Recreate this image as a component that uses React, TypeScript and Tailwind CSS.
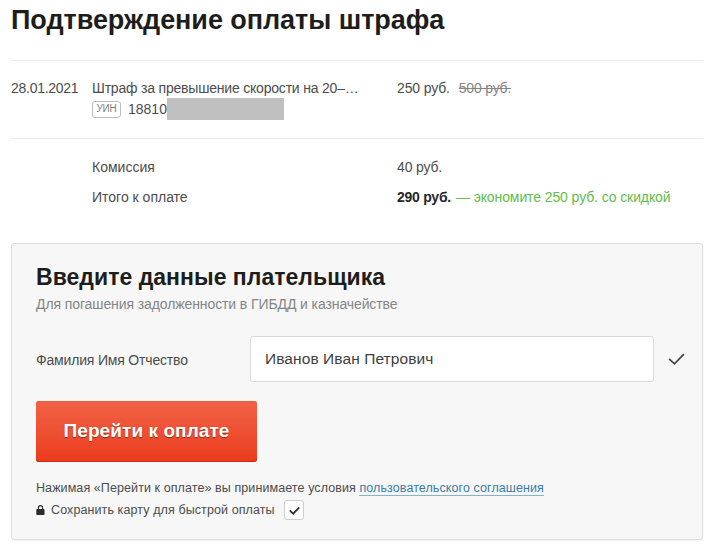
import type { ReactNode } from "react";

const FINE = {
  date: "28.01.2021",
  title: "Штраф за превышение скорости на 20–…",
  uin: "18810",
  price: "250 руб.",
  oldPrice: "500 руб.",
};

function CheckIcon({ className, strokeWidth }: { className: string; strokeWidth: number }) {
  return (
    <svg viewBox="0 0 18 14" fill="none" stroke="currentColor" strokeWidth={strokeWidth} className={className}>
      <path d="M1.2 6.8 6.9 12.2 16.8 1.8" />
    </svg>
  );
}

function LockIcon() {
  return (
    <svg viewBox="0 0 9 10" className="h-[10px] w-[9px] shrink-0 text-[#2b2b2b]">
      <path d="M2.4 5V2.7a2.1 2.1 0 0 1 4.2 0V5" fill="none" stroke="currentColor" strokeWidth="1.1" />
      <rect x="0.3" y="4" width="8.2" height="6" rx="0.8" fill="currentColor" />
    </svg>
  );
}

function SummaryRow({ label, children }: { label: string; children: ReactNode }) {
  return (
    <div className="flex h-[30px] items-center pl-[81px]">
      <span className="w-[305px]">{label}</span>
      <span className="whitespace-nowrap">{children}</span>
    </div>
  );
}

function FineSummary() {
  return (
    <section className="text-sm leading-5 text-[#4c4c4c]">
      <div className="flex h-[79px] border-y border-[#ededed] pt-[17px]">
        <span className="w-[81px] tracking-[-0.27px]">{FINE.date}</span>
        <div className="w-[305px]">
          <p className="tracking-[-0.2px] whitespace-nowrap">{FINE.title}</p>
          <div className="flex h-[22px] items-center">
            <span className="mr-[7px] flex h-[17px] w-[29px] items-center justify-center rounded-[3px] border border-[#bdbdbd] text-[10px] tracking-[-0.2px] text-[#808080]">
              УИН
            </span>
            <span className="w-[39px]">{FINE.uin}</span>
            <span className="h-[22px] w-[117px] bg-[#c0c0c0]" />
          </div>
        </div>
        <span className="tracking-[-0.15px]">{FINE.price}</span>
        <s className="ml-[9px] tracking-[-0.2px] text-[#858585]">{FINE.oldPrice}</s>
      </div>
      <div className="pt-[13px]">
        <SummaryRow label="Комиссия">
          <span className="tracking-[-0.15px]">40 руб.</span>
        </SummaryRow>
        <SummaryRow label="Итого к оплате">
          <b className="tracking-[-0.25px] text-[#262626]">290 руб.</b>
          <span className="ml-[5px] tracking-[-0.1px] text-[#62bd4b]">— экономите 250 руб. со скидкой</span>
        </SummaryRow>
      </div>
    </section>
  );
}

function PayerForm() {
  return (
    <form className="mt-[31px] h-[297px] w-[692px] rounded-[3px] border border-[#dedede] bg-[#f7f7f7] px-6 pt-[18px] shadow-[0_1px_2px_rgba(0,0,0,0.05)]">
      <h2 className="text-[23px] leading-[30px] font-bold tracking-[0.03px] whitespace-nowrap text-[#1d1d1b]">
        Введите данные плательщика
      </h2>
      <p className="mt-px text-sm leading-[22px] tracking-[-0.1px] text-[#858585]">
        Для погашения задолженности в ГИБДД и казначействе
      </p>

      <div className="mt-[21px] flex h-[46px] items-center">
        <label htmlFor="payer" className="w-[214px] shrink-0 pt-px text-sm tracking-[-0.18px] text-[#4c4c4c]">
          Фамилия Имя Отчество
        </label>
        <input
          id="payer"
          defaultValue="Иванов Иван Петрович"
          className="h-[46px] w-[404px] shrink-0 rounded-[3px] border border-[#d9d9d9] bg-white px-[14px] text-[15.5px] tracking-[0.08px] text-[#404040]"
        />
        <CheckIcon className="ml-[14px] h-[14px] w-[17px] shrink-0 text-[#444]" strokeWidth={1.8} />
      </div>

      <button
        type="button"
        className="mt-[19px] block h-[61px] w-[221px] rounded-[3px] bg-linear-to-b from-[#f16245] to-[#eb3a1b] text-[19px] font-bold tracking-[0.07px] whitespace-nowrap text-white shadow-[inset_0_-1px_0_#cc2b12,inset_0_1px_0_#e85b3e] text-shadow-[0_1px_1px_rgba(0,0,0,0.4)]"
      >
        Перейти к оплате
      </button>

      <p className="mt-[17px] text-[12.5px] leading-[18px] tracking-[0.09px] whitespace-nowrap text-[#4c4c4c]">
        Нажимая «Перейти к оплате» вы принимаете условия{" "}
        <a href="#terms" className="border-b border-[#84b5d0] text-[#3a7ca5]">
          пользовательского соглашения
        </a>
      </p>
      <div className="mt-[3px] flex h-5 items-center text-[12.5px] text-[#4c4c4c]">
        <LockIcon />
        <span className="ml-[6px] w-[224px] tracking-[0.1px] whitespace-nowrap">
          Сохранить карту для быстрой оплаты
        </span>
        <span className="ml-[9px] flex size-5 items-center justify-center rounded-[3px] border border-[#cfcfcf] bg-white">
          <CheckIcon className="h-[9px] w-[11px] text-[#333]" strokeWidth={3} />
        </span>
      </div>
    </form>
  );
}

export default function App() {
  return (
    <main className="h-[548px] w-[709px] overflow-hidden bg-white pl-[11px] font-['Liberation_Sans',Arial,sans-serif]">
      <div className="w-[692px]">
        <h1 className="h-[60px] pt-[3px] text-[27px] leading-[34px] font-bold tracking-[-0.05px] whitespace-nowrap text-[#1d1d1b]">
          Подтверждение оплаты штрафа
        </h1>
        <FineSummary />
        <PayerForm />
      </div>
    </main>
  );
}
